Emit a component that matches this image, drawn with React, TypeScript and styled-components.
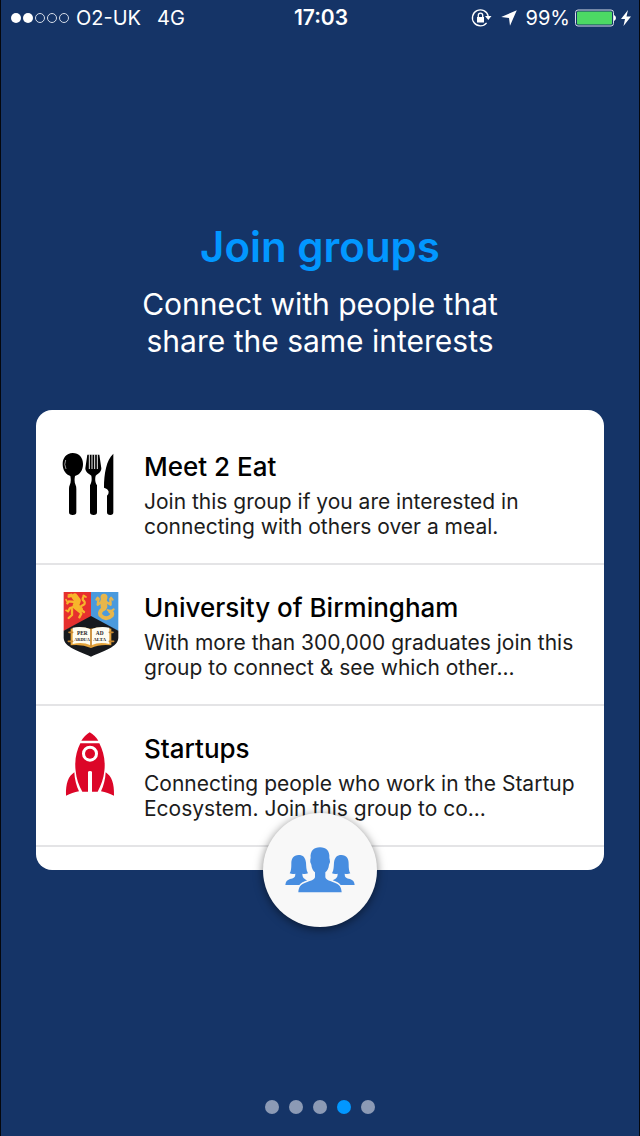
import React from "react";
import styled, { createGlobalStyle } from "styled-components";

const GlobalStyle = createGlobalStyle`
  *, *::before, *::after { box-sizing: border-box; }
  body {
    margin: 0;
    background: #153467;
    font-family: Inter, "Liberation Sans", sans-serif;
  }
`;

const Screen = styled.div`
  min-height: 100vh;
  display: flex;
  flex-direction: column;
  background: #153467;
  border-left: 1px solid #05070c;
  border-right: 1px solid #05070c;
`;

const StatusBar = styled.header`
  display: grid;
  grid-template-columns: 1fr auto 1fr;
  align-items: center;
  height: 36px;
  padding: 0 8px 0 10px;
  color: #fff;
  font-size: 20px;
  line-height: 24px;
`;

const Carrier = styled.div`
  display: flex;
  align-items: center;
  gap: 16px;
`;

const Signal = styled.svg`
  display: block;
  margin-right: -9px;
`;

const Clock = styled.time`
  font-size: 21px;
  font-weight: 600;
`;

const Power = styled.div`
  display: flex;
  align-items: center;
  justify-content: flex-end;
  gap: 5px;
  svg { display: block; flex: none; }
`;

const StatusIcon = styled.svg`
  margin-right: 4px;
`;

const Main = styled.main`
  flex: 1;
  display: flex;
  flex-direction: column;
  padding: 187px 35px 0;
`;

const Title = styled.h1`
  margin: 0;
  color: #0297ff;
  font-size: 42px;
  font-weight: 600;
  line-height: 48px;
  text-align: center;
`;

const Subtitle = styled.p`
  margin: 15px 0 0;
  color: #fff;
  font-size: 30px;
  line-height: 37px;
  text-align: center;
  white-space: pre-line;
`;

const Card = styled.section`
  position: relative;
  margin-top: 50px;
  padding: 14px 0 23px;
  border-radius: 16px;
  background: #fff;
`;

const GroupList = styled.ul`
  margin: 0;
  padding: 0;
  list-style: none;
`;

const GroupRow = styled.li`
  display: flex;
  gap: 25px;
  height: 141px;
  padding: 26px 12px 0 26px;
  border-bottom: 2px solid #e4e4e6;
  svg { display: block; flex: none; }
`;

const GroupName = styled.h2`
  margin: 0;
  padding-top: 1px;
  color: #000;
  font-size: 26px;
  font-weight: 500;
  line-height: 32px;
`;

const GroupText = styled.p`
  margin: 6px 0 0;
  color: #1c1c1c;
  font-size: 21px;
  line-height: 25px;
  white-space: pre-line;
`;

const Badge = styled.div`
  position: absolute;
  left: 50%;
  bottom: 0;
  transform: translate(-50%, 50%);
  display: flex;
  align-items: center;
  justify-content: center;
  width: 114px;
  height: 114px;
  border-radius: 50%;
  background: #f8f8f8;
  box-shadow: 0 2px 10px rgba(0, 0, 0, 0.5);
`;

const Pager = styled.nav`
  display: flex;
  justify-content: center;
  gap: 10px;
  padding-bottom: 22px;
`;

const Dot = styled.button<{ $active?: boolean }>`
  width: 14px;
  height: 14px;
  padding: 0;
  border: 0;
  border-radius: 50%;
  background: ${(p) => (p.$active ? "#0297ff" : "#8c9ab5")};
`;

const CutleryIcon = () => (
  <svg width="57" height="68" viewBox="36 30 171 204" aria-hidden="true">
    <path d="M68 39C49 39 38 54 38 72C38 91 48 104 61 108C63 118 63 127 59 136Q57 140 57 147V217Q57 225 68 225T79 217V147Q79 140 77 136C73 127 73 118 75 108C90 104 99 91 99 72C99 53 87 39 68 39Z" />
    <path d="M47 60Q41 73 48 87" fill="none" stroke="#bbb" strokeWidth="2.5" />
    <path d="M112 44H148L154 85C154 95 146 101 137 107C134 119 136 127 141 136V217Q141 225 131 225Q120 225 120 217V136C125 127 126 119 124 107C114 101 106 95 106 85Z" />
    <path d="M118 43V87M126 43V87M134 43V87M142 43V87" stroke="#fff" strokeWidth="2.8" />
    <path d="M190 41V217Q190 225 181 225Q171 225 171 217V167Q176 165 176 155Q174 146 162 143C162 101 169 60 190 41Z" />
  </svg>
);

const CrestIcon = () => (
  <svg width="57" height="68" viewBox="36 33 171 204" aria-hidden="true">
    <path d="M41 36H123V112L41 153Z" fill="#e6302e" />
    <path d="M123 36H205V153L123 112Z" fill="#4a9add" />
    <path d="M41 152L123 108L205 152V174C203 202 163 211 123 230C83 211 43 202 41 174Z" fill="#17191d" />
    <g fill="none" stroke="#f7b62b" strokeLinecap="round" strokeLinejoin="round">
      <path d="M74 50L83 62L77 78L89 88" strokeWidth="19" />
      <path d="M68 47L56 50M76 66L56 64L52 70M74 80L60 84L54 94M66 87L66 105L56 114M84 88L94 101L88 112M92 88L102 96M94 78Q110 72 102 63Q94 58 102 48" strokeWidth="7" />
      <path d="M55 45L65 43M51 64L48 59M52 93L48 91M100 46L108 51" strokeWidth="5" />
    </g>
    <g fill="none" stroke="#e8b64b" strokeLinecap="round" strokeLinejoin="round">
      <circle cx="162" cy="52" r="5" strokeWidth="11" />
      <path d="M161 64L162 79" strokeWidth="20" />
      <path d="M155 66L143 74L146 56M169 66L182 74L181 57" strokeWidth="7" />
      <path d="M163 86Q147 92 151 105Q168 124 185 107Q190 98 181 95" strokeWidth="12" />
      <path d="M181 95L173 90M181 95L191 88M143 53L139 59M183 53L188 59" strokeWidth="6" />
    </g>
    <path d="M62 146Q97 139 122 147Q149 139 184 146V196Q149 192 123 204Q96 192 62 196Z" fill="#e4a33b" />
    <path d="M68 143Q98 137 122 148V196Q98 185 68 192Z" fill="#fffdf2" />
    <path d="M124 148Q148 137 178 143V192Q148 185 124 196Z" fill="#fffdf2" />
    <path d="M123 148V199M57 157H68M55 184H68M178 157H189M178 184H191" stroke="#c88932" strokeWidth="5" strokeLinecap="round" />
    <g fill="#26221f" fontFamily="Liberation Serif, serif" fontSize="16" fontWeight="700" textAnchor="middle">
      <text x="97" y="166">PER</text>
      <text x="96" y="184" fontSize="13">ARDUA</text>
      <text x="149" y="166">AD</text>
      <text x="149" y="184" fontSize="15">ALTA</text>
    </g>
  </svg>
);

const RocketIcon = () => (
  <svg width="57" height="68" viewBox="36 34 171 204" fill="#dc0628" aria-hidden="true">
    <path d="M119 35C109 42 100 50 94 60H145C139 50 130 42 119 35Z" />
    <path fillRule="evenodd" d="M91 68H148C160 91 167 120 163 151C161 173 153 194 143 213H126V155Q126 151 120 151Q114 151 114 155V213H97C86 194 79 173 77 151C73 120 79 91 91 68ZM120 75A24 24 0 1 0 120 123A24 24 0 1 0 120 75Z" />
    <circle cx="120" cy="99" r="15" />
    <path d="M73 155C55 167 47 187 48 225C61 219 73 215 87 212C79 195 74 177 73 155ZM167 155C185 167 193 187 192 225C179 219 167 215 153 212C161 195 166 177 167 155Z" />
  </svg>
);

const PeopleIcon = () => (
  <svg width="70" height="46" viewBox="107 143 210 138" fill="#478de0" aria-hidden="true">
    <path d="M148 167C132 167 126 178 126 194C126 207 125 216 121 222Q129 225 138 223C138 235 133 236 122 239C113 242 109 247 108 257H150Q157 248 174 243C166 239 159 236 159 223Q168 225 176 222C170 211 171 201 170 190C168 174 161 167 148 167Z" />
    <path d="M276 167C263 167 256 174 254 190C253 201 254 211 248 222Q256 225 265 223C265 236 259 238 250 243Q267 248 274 257H316C315 247 311 242 302 239C291 236 286 235 286 223Q295 225 303 222C299 216 298 207 298 194C298 178 292 167 276 167Z" />
    <path d="M212 144C193 144 182 156 184 176L183 180Q181 187 186 196C187 207 191 213 197 219V233C196 242 184 244 168 250C153 255 148 263 147 279H277C276 263 271 255 256 250C240 244 229 242 228 233V219C234 213 238 207 239 196Q244 187 241 180L240 176C242 156 231 144 212 144Z" />
  </svg>
);

const groups = [
  {
    name: "Meet 2 Eat",
    text: "Join this group if you are interested in\nconnecting with others over a meal.",
    icon: <CutleryIcon />,
  },
  {
    name: "University of Birmingham",
    text: "With more than 300,000 graduates join this\ngroup to connect & see which other...",
    icon: <CrestIcon />,
  },
  {
    name: "Startups",
    text: "Connecting people who work in the Startup\nEcosystem. Join this group to co...",
    icon: <RocketIcon />,
  },
];

const pages = [1, 2, 3, 4, 5];

export default function App() {
  return (
    <>
      <GlobalStyle />
      <Screen>
        <StatusBar>
          <Carrier>
            <Signal width="58" height="12" viewBox="0 0 58 12" aria-hidden="true">
              <g fill="#fff">
                <circle cx="5" cy="6" r="5" />
                <circle cx="17" cy="6" r="5" />
              </g>
              <g fill="none" stroke="#d5dce8" strokeWidth="1">
                <circle cx="29" cy="6" r="4.5" />
                <circle cx="41" cy="6" r="4.5" />
                <circle cx="53" cy="6" r="4.5" />
              </g>
            </Signal>
            <span>O2-UK</span>
            <span>4G</span>
          </Carrier>
          <Clock>17:03</Clock>
          <Power>
            <StatusIcon width="21" height="20" viewBox="0 0 21 20" fill="none" stroke="#fff" aria-hidden="true">
              <path d="M17.2 8A8 8 0 1 0 15.6 14.9" strokeWidth="1.3" />
              <path d="M14 8H20.5L17.3 12Z" fill="#fff" stroke="none" />
              <path d="M6 9H13V14.5H6Z" fill="#fff" stroke="none" />
              <path d="M7.3 9V7.3A2.2 2.2 0 0 1 11.7 7.3V9" strokeWidth="1.3" />
            </StatusIcon>
            <StatusIcon width="16" height="16" viewBox="0 0 16 16" fill="#fff" aria-hidden="true">
              <path d="M15.8 0.2L9 15.8L8 8L0.2 7Z" />
            </StatusIcon>
            <span>99%</span>
            <svg width="41" height="18" viewBox="0 0 41 18" aria-hidden="true">
              <rect x="0.5" y="1" width="38" height="16" rx="2.5" fill="none" stroke="#d5dce8" />
              <rect x="2" y="2.5" width="35" height="13" rx="1" fill="#4cd964" />
              <path d="M39 6Q41 7 41 9T39 12Z" fill="#fff" />
            </svg>
            <svg width="10" height="18" viewBox="0 0 10 18" fill="#fff" aria-hidden="true">
              <path d="M7 1L0 10H4L2.5 17L10 7.5H5.5Z" />
            </svg>
          </Power>
        </StatusBar>
        <Main>
          <Title>Join groups</Title>
          <Subtitle>{"Connect with people that\nshare the same interests"}</Subtitle>
          <Card>
            <GroupList>
              {groups.map((group) => (
                <GroupRow key={group.name}>
                  {group.icon}
                  <div>
                    <GroupName>{group.name}</GroupName>
                    <GroupText>{group.text}</GroupText>
                  </div>
                </GroupRow>
              ))}
            </GroupList>
            <Badge>
              <PeopleIcon />
            </Badge>
          </Card>
        </Main>
        <Pager aria-label="Pages">
          {pages.map((page) => (
            <Dot
              key={page}
              type="button"
              $active={page === 4}
              aria-label={`Page ${page}`}
              aria-current={page === 4 ? "page" : undefined}
            />
          ))}
        </Pager>
      </Screen>
    </>
  );
}
